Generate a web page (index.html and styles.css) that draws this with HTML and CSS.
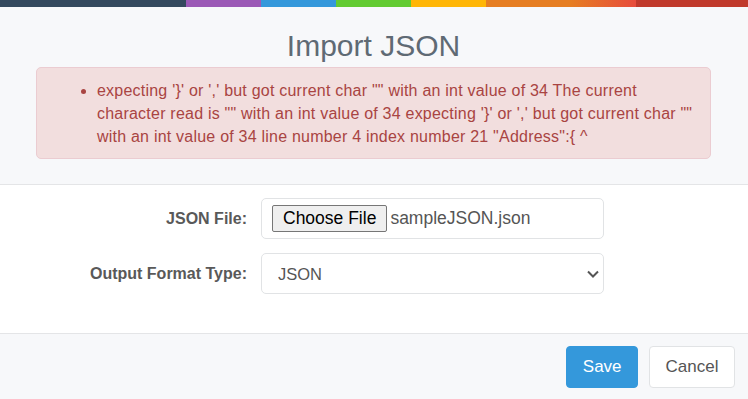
FILE: index.html
```html
<!DOCTYPE html>
<html lang="en">

<head>
    <meta charset="UTF-8">
    <meta name="viewport" content="width=device-width, initial-scale=1.0">
    <title>Import JSON</title>
    <link rel="stylesheet" href="styles.css">
</head>

<body>
    <div class="color-line"></div>
    <div class="modal-header">
        <h4 class="modal-title">Import JSON</h4>
        <div class="alert alert-danger">
            <ul>
                <li>expecting '}' or ',' but got current char &quot;&quot; with an int value of 34 The current character read is &quot;&quot; with an int value of 34 expecting '}' or ',' but got current char &quot;&quot; with an int value of 34 line number 4 index number 21 &quot;Address&quot;:{ ^</li>
            </ul>
        </div>
    </div>
    <div class="modal-body">
        <div class="form-row">
            <label class="form-label">JSON File:</label>
            <div class="form-control file-field">
                <span class="file-btn">Choose File</span>
                <span class="file-name">sampleJSON.json</span>
            </div>
        </div>
        <div class="form-row">
            <label class="form-label">Output Format Type:</label>
            <div class="select-wrap">
                <select class="form-control">
                    <option>JSON</option>
                    <option>XML</option>
                    <option>CSV</option>
                </select>
                <!-- chevron drawn by hand, native arrow is hidden -->
                <svg class="chevron" width="12" height="8" viewBox="0 0 12 8">
                    <path d="M1 1.5 L6 6.5 L11 1.5" fill="none" stroke="#555" stroke-width="2" />
                </svg>
            </div>
        </div>
    </div>
    <div class="modal-footer">
        <button class="btn btn-primary">Save</button>
        <button class="btn btn-default">Cancel</button>
    </div>
</body>

</html>
```

FILE: styles.css
```css
body {
    margin: 0;
    font-family: "Liberation Sans", Arial, sans-serif;
    background: #f7f8fa;
}

.color-line {
    height: 7px;
    background: linear-gradient(to right,
        #34495e 0, #34495e 186px,
        #9b59b6 186px, #9b59b6 261px,
        #3498db 261px, #3498db 336px,
        #62cb31 336px, #62cb31 411px,
        #ffb606 411px, #ffb606 486px,
        #e67e22 486px, #e67e22 570px,
        #e74c3c 636px,
        #c0392b 636px, #c0392b 100%);
}

.modal-header {
    padding: 22px 37px 25px 36px;
    background: #f7f8fa;
    border-bottom: 1px solid #e4e5e7;
}

.modal-title {
    margin: 0;
    text-align: center;
    font-size: 30px;
    line-height: 33px;
    font-weight: 400;
    color: #5f6a74;
}

.alert {
    margin-top: 5px;
    padding: 11px 15px 10px 14px;
    border: 1px solid #ebccd1;
    border-radius: 5px;
    background: #f2dede;
    color: #a94442;
    font-size: 16px;
    line-height: 23px;
    letter-spacing: 0.22px;
}

.alert ul {
    margin: 0;
    padding-left: 46px;
}

.modal-body {
    padding: 13px 0 39px;
    background: #fff;
}

.form-row {
    display: grid;
    grid-template-columns: 247px 343px;
    column-gap: 14px;
    align-items: center;
}

.form-row + .form-row {
    margin-top: 14px;
}

.form-label {
    text-align: right;
    font-size: 16px;
    font-weight: 700;
    color: #595959;
}

.form-control {
    box-sizing: border-box;
    height: 41px;
    border: 1px solid #e1e3e5;
    border-radius: 5px;
    background: #fff;
    font-family: inherit;
    font-size: 16.5px;
    color: #555;
}

.file-field {
    display: flex;
    align-items: center;
    gap: 3px;
    padding: 0 10px;
}

.file-btn {
    padding: 2px 10px;
    line-height: 21px;
    font-size: 17.5px;
    color: #000;
    background: #efefef;
    border: 1px solid #767676;
    border-radius: 2px;
}

.file-name {
    font-size: 17.5px;
    color: #555;
}

.select-wrap {
    position: relative;
}

.select-wrap select {
    display: block;
    width: 100%;
    padding: 0 16px;
    appearance: none;
    -webkit-appearance: none;
}

.select-wrap .chevron {
    position: absolute;
    right: 5px;
    top: 17px;
    pointer-events: none;
}

.modal-footer {
    display: flex;
    justify-content: flex-end;
    gap: 11px;
    padding: 12px 13px 12px;
    border-top: 1px solid #e4e5e7;
    background: #f7f8fa;
}

.btn {
    height: 42px;
    padding: 0 15.5px;
    border-radius: 4px;
    font-family: inherit;
    font-size: 17px;
    cursor: pointer;
}

.btn-primary {
    border: 1px solid #3498db;
    background: #3498db;
    color: #fff;
}

.btn-default {
    border: 1px solid #e1e3e5;
    background: #fff;
    color: #555;
}
```
